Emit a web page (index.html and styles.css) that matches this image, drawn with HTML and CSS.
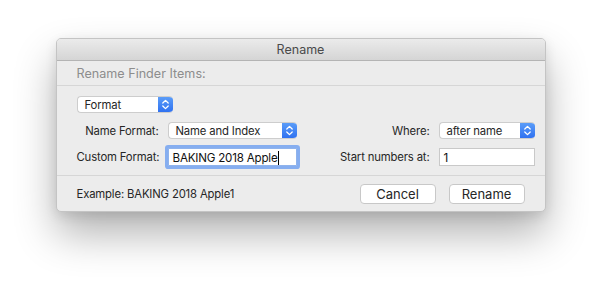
FILE: index.html
```html
<!DOCTYPE html>
<html lang="en">
<head>
  <meta charset="UTF-8">
  <meta name="viewport" content="width=device-width, initial-scale=1.0">
  <title>Rename</title>
  <link rel="stylesheet" href="styles.css">
</head>
<body>
  <div class="window">
    <div class="titlebar">Rename</div>

    <div class="header">Rename Finder Items:</div>

    <div class="content">
      <div class="popup popup-mode">
        <span class="popup-label">Format</span>
        <span class="stepper">
          <svg width="15" height="17" viewBox="0 0 15 17"><path d="M4.8 7 L7.5 4.4 L10.2 7 M4.8 10 L7.5 12.6 L10.2 10" fill="none" stroke="#fff" stroke-width="1.3" stroke-linecap="round" stroke-linejoin="round"/></svg>
        </span>
      </div>

      <div class="form-grid">
        <label class="form-label">Name Format:</label>
        <div class="popup">
          <span class="popup-label">Name and Index</span>
          <span class="stepper">
            <svg width="15" height="17" viewBox="0 0 15 17"><path d="M4.8 7 L7.5 4.4 L10.2 7 M4.8 10 L7.5 12.6 L10.2 10" fill="none" stroke="#fff" stroke-width="1.3" stroke-linecap="round" stroke-linejoin="round"/></svg>
          </span>
        </div>
        <label class="form-label">Where:</label>
        <div class="popup">
          <span class="popup-label">after name</span>
          <span class="stepper">
            <svg width="15" height="17" viewBox="0 0 15 17"><path d="M4.8 7 L7.5 4.4 L10.2 7 M4.8 10 L7.5 12.6 L10.2 10" fill="none" stroke="#fff" stroke-width="1.3" stroke-linecap="round" stroke-linejoin="round"/></svg>
          </span>
        </div>

        <label class="form-label">Custom Format:</label>
        <div class="field focused">BAKING 2018 Apple<span class="caret"></span></div>
        <label class="form-label">Start numbers at:</label>
        <div class="field">1</div>
      </div>
    </div>

    <div class="footer">
      <span class="example">Example: BAKING 2018 Apple1</span>
      <div class="buttons">
        <button class="btn">Cancel</button>
        <button class="btn">Rename</button>
      </div>
    </div>
  </div>
</body>
</html>
```

FILE: styles.css
```css
html {
  background-color: #ffffff;
}

body {
  margin: 0;
  padding: 38px 0 0;
  min-height: 286px;
  box-sizing: border-box;
  background-color: #ffffff;
  font-family: Inter, 'Noto Sans', sans-serif;
  font-size: 11.3px;
  letter-spacing: -0.15px;
  color: #262626;
  display: flex;
  justify-content: center;
  align-items: flex-start;
}

.window {
  width: 490px;
  box-sizing: border-box;
  background-color: #ececec;
  border: 1px solid #c4c4c4;
  border-radius: 5px;
  overflow: hidden;
  box-shadow: 0 22px 42px rgba(0, 0, 0, 0.3), 0 4px 12px rgba(0, 0, 0, 0.1);
}

.titlebar {
  height: 21px;
  line-height: 21px;
  text-align: center;
  font-size: 12.5px;
  letter-spacing: 0;
  color: #4a4a4a;
  background: linear-gradient(#ebebeb, #d5d5d5);
  border-bottom: 1px solid #b4b4b4;
}

.header {
  height: 24px;
  line-height: 25px;
  padding-left: 20px;
  font-size: 12.6px;
  letter-spacing: 0;
  color: #8d8d8d;
  border-bottom: 1px solid #d6d6d6;
}

.content {
  padding: 10px 10px 9px 20px;
}

.popup {
  display: flex;
  align-items: center;
  height: 17px;
  box-sizing: border-box;
  background-color: #ffffff;
  border: 1px solid #cdcdcd;
  border-right: none;
  border-radius: 4px;
  overflow: hidden;
}

.popup-mode {
  width: 96px;
  margin-bottom: 9px;
}

.popup-label {
  flex: 1;
  padding-left: 7px;
  white-space: nowrap;
}

.stepper {
  width: 15px;
  height: 17px;
  display: flex;
  background: linear-gradient(#5d9ff9, #2d6ff0);
}

.form-grid {
  display: grid;
  grid-template-columns: 82px 129px 1fr 96px;
  grid-template-rows: 17px 18px;
  column-gap: 9px;
  row-gap: 9px;
  align-items: center;
}

.form-label {
  text-align: right;
  white-space: nowrap;
}

.field {
  height: 18px;
  line-height: 18px;
  box-sizing: border-box;
  padding-left: 4px;
  background-color: #ffffff;
  border: 1px solid #c9c9c9;
  color: #111111;
  font-size: 11.6px;
  letter-spacing: -0.2px;
}

.field.focused {
  border-color: #8fb3ec;
  box-shadow: 0 0 0 3px #86aef0;
  border-radius: 1px;
}

.caret {
  display: inline-block;
  width: 1px;
  height: 14px;
  background-color: #000000;
  vertical-align: -3px;
}

.footer {
  display: flex;
  justify-content: space-between;
  align-items: center;
  height: 35px;
  padding: 0 20px;
  border-top: 1px solid #d6d6d6;
}

.example {
  padding-top: 1px;
}

.buttons {
  display: flex;
  gap: 13px;
}

.btn {
  width: 76px;
  height: 20px;
  padding: 0;
  font-family: Inter, 'Noto Sans', sans-serif;
  font-size: 13px;
  color: #262626;
  background-color: #ffffff;
  border: 1px solid #c8c8c8;
  border-radius: 4px;
}
```
